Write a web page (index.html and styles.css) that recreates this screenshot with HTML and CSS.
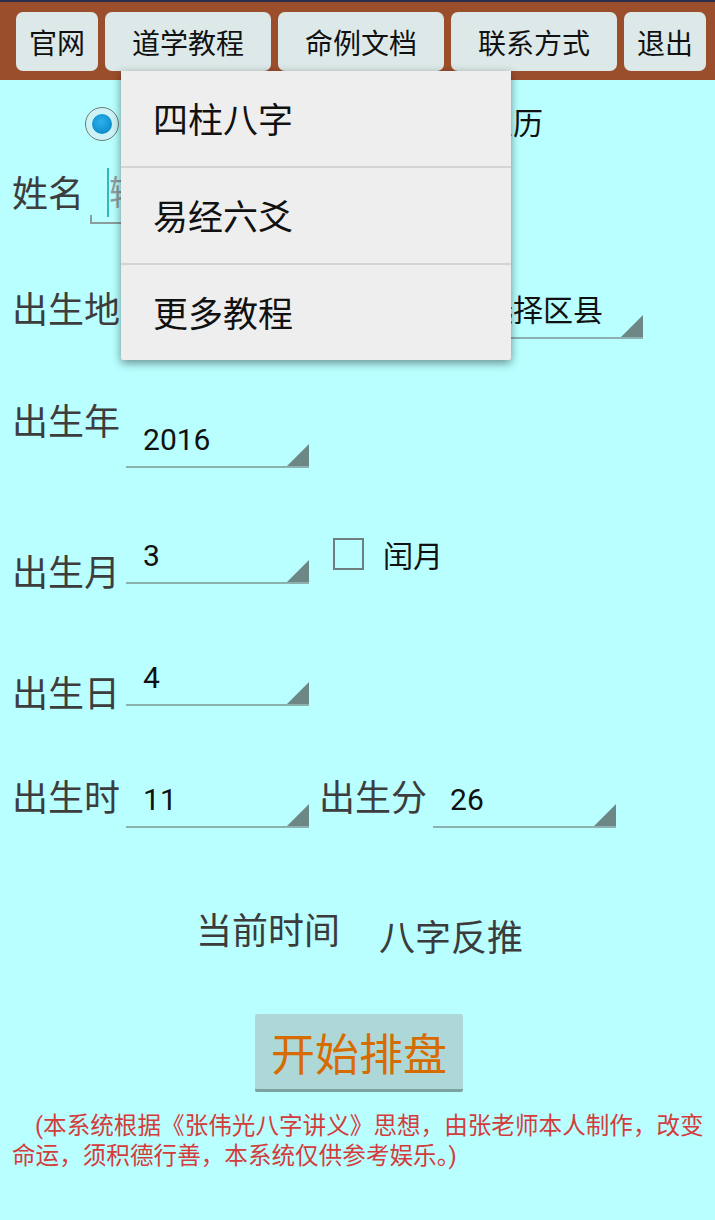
FILE: index.html
```html
<!DOCTYPE html>
<html>

<head>
  <meta charset="utf-8">
  <title>八字排盘</title>
  <link rel="stylesheet" href="styles.css">
</head>

<body>

  <div class="topbar">
    <button class="tab tab-s">官网</button>
    <button class="tab tab-l">道学教程</button>
    <button class="tab tab-l">命例文档</button>
    <button class="tab tab-l">联系方式</button>
    <button class="tab tab-s">退出</button>
  </div>

  <!-- popup opened from 道学教程 -->
  <div class="menu">
    <div class="menu-item">四柱八字</div>
    <div class="menu-item">易经六爻</div>
    <div class="menu-item">更多教程</div>
  </div>

  <div class="main">
    <div class="row row-cal">
      <span class="radio checked"></span>
      <span class="radio radio-2"></span><span class="opt">农历</span>
    </div>

    <div class="row row-name">
      <span class="label lb-name">姓名</span>
      <div class="name-input">
        <span class="cursor"></span>
        <input class="name-field" type="text" placeholder="输入姓名">
      </div>
    </div>

    <div class="row row-place">
      <span class="label lb-place">出生地</span>
      <div class="spinner sp-prov"></div>
      <div class="spinner sp-city"></div>
      <div class="spinner sp-area">选择区县</div>
    </div>

    <div class="row row-year">
      <span class="label lb-year">出生年</span>
      <div class="spinner">2016</div>
    </div>

    <div class="row row-month">
      <span class="label lb-month">出生月</span>
      <div class="spinner">3</div>
      <label class="leap"><span class="check"></span>闰月</label>
    </div>

    <div class="row row-day">
      <span class="label lb-day">出生日</span>
      <div class="spinner">4</div>
    </div>

    <div class="row row-time">
      <span class="label lb-time">出生时</span>
      <div class="spinner">11</div>
      <span class="label lb-min">出生分</span>
      <div class="spinner sp-min">26</div>
    </div>

    <div class="actions">
      <button class="link-btn">当前时间</button>
      <button class="link-btn reverse">八字反推</button>
    </div>

    <div class="start-wrap">
      <button class="start">开始排盘</button>
    </div>

    <p class="note">(本系统根据《张伟光八字讲义》思想，由张老师本人制作，改变<br>命运，须积德行善，本系统仅供参考娱乐。)</p>
  </div>

</body>

</html>
```

FILE: styles.css
```css
body {
  margin: 0;
  position: relative;
  min-height: 1220px;
  background: #b9ffff;
  font-family: Roboto, "Noto Sans CJK SC", sans-serif;
  color: #111;
}

button { font-family: inherit; cursor: pointer; }

/* top bar */
.topbar {
  height: 80px;
  box-sizing: border-box;
  border-top: 2px solid #2b2f4c;
  background: #9b4e2c;
  display: flex;
  gap: 7px;
  padding: 10px 0 0 16px;
}
.tab {
  height: 59px;
  border: none;
  border-radius: 7px;
  background: #dde9e9;
  font-size: 28px;
  color: #111;
  padding: 0;
}
.tab-s { width: 82px; }
.tab-l { width: 166px; }

/* dropdown menu */
.menu {
  position: absolute;
  left: 121px;
  top: 71px;
  width: 390px;
  background: #eeeeee;
  box-shadow: 0 3px 10px rgba(0, 0, 0, 0.45);
  border-radius: 0 0 2px 2px;
  z-index: 5;
}
.menu-item {
  height: 97px;
  box-sizing: border-box;
  padding: 6px 0 0 32px;
  line-height: 89px;
  font-size: 35px;
  color: #111;
  border-top: 2px solid #d4d4d4;
}
.menu-item:first-child { border-top: none; height: 95px; }

/* form rows */
.row { display: flex; align-items: flex-end; height: 60px; padding-left: 12px; }

.label { font-size: 36px; line-height: 40px; color: #3d3d3d; }

.row-cal { height: 64px; margin-top: 12px; align-items: center; padding-left: 85px; }
.radio {
  width: 34px;
  height: 34px;
  box-sizing: border-box;
  border: 1.5px solid #6b7b7b;
  border-radius: 50%;
  background: #cdf3f6;
  display: flex;
  align-items: center;
  justify-content: center;
}
.radio.checked::after {
  content: "";
  width: 20px;
  height: 20px;
  border-radius: 50%;
  background: radial-gradient(circle at 45% 40%, #2fb0ea, #1294d4 60%, #0b77b0);
}
.radio-2 { margin-left: 322px; }
.opt { font-size: 30px; line-height: 40px; margin-left: 8px; }

.row-name { margin-top: 8px; }
.lb-name { margin-bottom: 9px; }
.name-input {
  width: 390px;
  height: 56px;
  margin-left: 6px;
  padding-left: 17px;
  box-sizing: border-box;
  display: flex;
  align-items: flex-start;
  background:
    linear-gradient(#8b9d9d, #8b9d9d) left bottom / 2px 9px no-repeat,
    linear-gradient(#8b9d9d, #8b9d9d) right bottom / 2px 9px no-repeat,
    linear-gradient(#8b9d9d, #8b9d9d) left bottom / 100% 2px no-repeat;
}
.cursor { width: 2px; height: 49px; background: #35b6c2; }
.name-field {
  width: 340px;
  height: 40px;
  margin-top: 5px;
  padding: 0;
  border: none;
  outline: none;
  background: transparent;
  font-family: inherit;
  font-size: 34px;
  line-height: 40px;
  color: #111;
}
.name-field::placeholder { color: #8e9e9e; }

.spinner {
  position: relative;
  width: 183px;
  height: 56px;
  box-sizing: border-box;
  margin-left: 6px;
  padding: 0 0 6px 17px;
  border-bottom: 2px solid #8db0b0;
  display: flex;
  align-items: flex-end;
  font-size: 30px;
  line-height: 40px;
  color: #111;
}
.spinner::after {
  content: "";
  position: absolute;
  right: 0;
  bottom: 0;
  width: 22px;
  height: 22px;
  background: #6d8787;
  clip-path: polygon(100% 0, 100% 100%, 0 100%);
}

.row-place { margin-top: 55px; }
.lb-place { margin-bottom: 8px; }
.sp-prov, .sp-city { width: 164px; }
.sp-area { width: 177px; }

.row-year { margin-top: 69px; }
.lb-year { margin-bottom: 25px; }

.row-month { margin-top: 56px; }
.lb-month { margin-bottom: -10px; }
.leap {
  display: flex;
  align-items: center;
  height: 40px;
  margin: 0 0 10px 24px;
  font-size: 30px;
}
.check {
  width: 31px;
  height: 32px;
  box-sizing: border-box;
  border: 2px solid #6f7f7f;
  margin-right: 19px;
}

.row-day { margin-top: 62px; }
.lb-day { margin-bottom: -9px; }

.row-time { margin-top: 62px; }
.lb-time { margin-bottom: 9px; }
.lb-min { margin: 0 0 9px 10px; }

/* bottom buttons */
.actions {
  display: flex;
  justify-content: center;
  align-items: flex-start;
  gap: 39px;
  height: 47px;
  margin-top: 84px;
  padding-left: 4px;
}
.link-btn {
  border: none;
  background: none;
  padding: 0;
  font-size: 36px;
  line-height: 40px;
  color: #3b3b3b;
}
.link-btn.reverse { margin-top: 7px; }

.start-wrap { display: flex; justify-content: center; margin-top: 55px; padding-left: 3px; }
.start {
  width: 208px;
  height: 78px;
  border: none;
  border-bottom: 3px solid #7da2a2;
  border-radius: 2px;
  background: #aed8d8;
  font-size: 44px;
  color: #d66c00;
  padding: 0;
}

.note {
  margin: 19px 0 0;
  padding-left: 12px;
  text-indent: 23px;
  font-size: 23.6px;
  line-height: 30px;
  color: #d43c3c;
  white-space: nowrap;
}
```
